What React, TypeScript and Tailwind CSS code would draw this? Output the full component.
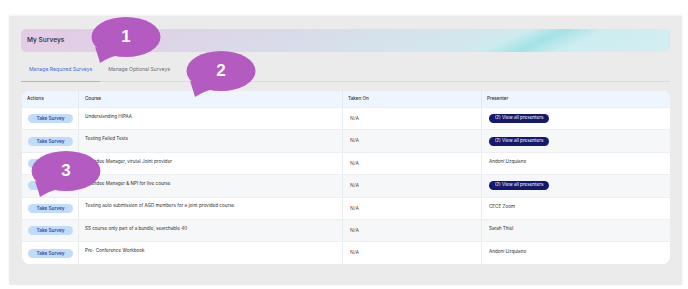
import React from "react";

const ROWS = [
  { course: "Understanding HIPAA", presenter: null },
  { course: "Testing Failed Tests", presenter: null },
  { course: "Attendee Manager, virutal Joint provider", presenter: "Andoni Uzquiano" },
  { course: "Attendee Manager & NPI for live course", presenter: null },
  { course: "Testing auto submission of AGD members for a joint provided course", presenter: "CECE Zoom" },
  { course: "SS course only part of a bundle, searchable 40", presenter: "Sarah Thiel" },
  { course: "Pre- Conference Workbook", presenter: "Andoni Uzquiano" },
];

function Bubble({ n, className }: { n: string; className: string }) {
  return (
    <div className={`absolute w-[72px] h-[48px] ${className}`}>
      <svg width="72" height="48" viewBox="0 0 72 48" className="absolute inset-0">
        <ellipse cx="35" cy="20" rx="34.5" ry="20" fill="#b45bc1" />
        <path d="M4 30 Q8 42 9 46 Q18 40 28 38 Z" fill="#b45bc1" />
      </svg>
      <div className="absolute left-0 top-0 w-[70px] h-[40px] flex items-center justify-center text-white text-[17px] font-bold font-['Liberation_Sans',sans-serif]">
        {n}
      </div>
    </div>
  );
}

export default function App() {
  return (
    <div className="relative w-[688px] h-[289px] bg-white overflow-hidden font-['Inter',sans-serif]">
      <div className="pt-[16px] pl-[9px]">
        <div className="w-[673px] h-[269px] bg-[#ebebeb] px-[12px] pt-[13px] shadow-[0_-1px_2px_rgba(0,0,0,0.06)]">
          <div className="h-[23px] rounded-[5px] px-[6px] flex items-center bg-[linear-gradient(155deg,#e4cbe5_3%,#d9dbe9_40%,#d3e6ed_65%,#cdebee_73%,#a3e2e7_78%,#cdedf0_84%,#d2eef1_97%)]">
            <span className="text-[6.6px] font-medium text-[#2b2b2b]">My Surveys</span>
          </div>

          <div className="mt-[6px] h-[24px] flex items-end border-b border-[#dcdcdc]">
            <div className="px-[8px] h-[23px] flex items-center border-b border-[#9ab8ee] -mb-px text-[5.1px] text-[#3b6fd6]">
              Manage Required Surveys
            </div>
            <div className="px-[8px] h-[23px] flex items-center text-[5.1px] text-[#6b6b6b]">
              Manage Optional Surveys
            </div>
          </div>

          <div className="mt-[9px] ml-px rounded-[8px] bg-white overflow-hidden text-[4.6px] text-[#2f2f2f]">
            <div className="flex h-[16px] bg-[#edf5fe] font-medium">
              <div className="w-[57px] pl-[5px] flex items-center border-r border-[#e4e9ef]">Actions</div>
              <div className="w-[264px] pl-[6px] flex items-center border-r border-[#e4e9ef]">Course</div>
              <div className="w-[139px] pl-[5px] flex items-center border-r border-[#e4e9ef]">Taken On</div>
              <div className="flex-1 pl-[5px] flex items-center">Presenter</div>
            </div>
            {ROWS.map((r, i) => (
              <div
                key={i}
                className={`flex h-[22.4px] border-t border-[#eceef1] ${i % 2 ? "bg-[#f6f7f9]" : "bg-white"}`}
              >
                <div className="w-[57px] pl-[6px] flex items-center border-r border-[#e9ecef]">
                  <div className="w-[45px] h-[9px] rounded-full bg-[#c1dbfa] flex items-center justify-center text-[4.7px] font-semibold text-[#2c4aa0]">
                    Take Survey
                  </div>
                </div>
                <div className="w-[264px] pl-[6px] pb-[3px] flex items-center border-r border-[#e9ecef]">
                  {r.course}
                </div>
                <div className="w-[139px] pl-[7px] flex items-center border-r border-[#e9ecef] text-[#555] text-[5px]">N/A</div>
                <div className="flex-1 pl-[7px] flex items-center">
                  {r.presenter ? (
                    <span className="pb-[2px]">{r.presenter}</span>
                  ) : (
                    <div className="w-[60px] h-[9px] rounded-full bg-[#14196e] flex items-center justify-center text-[4.6px] text-white">
                      (2) View all presenters
                    </div>
                  )}
                </div>
              </div>
            ))}
          </div>
        </div>
      </div>

      <Bubble n="1" className="left-[91px] top-[17px]" />
      <Bubble n="2" className="left-[186px] top-[51px]" />
      <Bubble n="3" className="left-[31px] top-[151px]" />
    </div>
  );
}
